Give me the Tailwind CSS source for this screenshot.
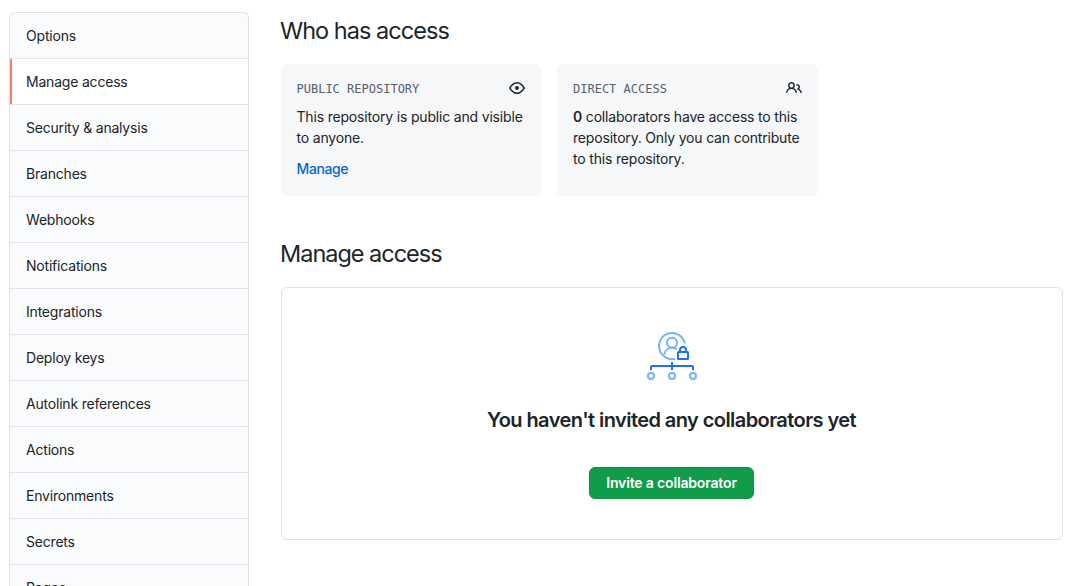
<!DOCTYPE html>
<html lang="en">
<head>
<meta charset="utf-8">
<title>Manage access</title>
<script src="https://cdn.jsdelivr.net/npm/@tailwindcss/browser@4"></script>
</head>
<body class="h-[586px] overflow-hidden bg-white font-['Inter',sans-serif] text-sm leading-[21px] text-[#202428] antialiased">
<div class="flex gap-8 pl-[9px] pt-3">
  <nav class="w-60 shrink-0 overflow-hidden rounded-md border border-[#dfe2e6] bg-[#fafbfc] tracking-[-0.2px] *:flex *:h-[46px] *:items-center *:border-b *:border-[#e3e5e9] *:pl-4">
    <a>Options</a>
    <a class="bg-white shadow-[inset_2px_0_0_#fb7a68]">Manage access</a>
    <a>Security &amp; analysis</a>
    <a>Branches</a>
    <a>Webhooks</a>
    <a>Notifications</a>
    <a>Integrations</a>
    <a>Deploy keys</a>
    <a>Autolink references</a>
    <a>Actions</a>
    <a>Environments</a>
    <a>Secrets</a>
    <a>Pages</a>
  </nav>
  <main class="w-[782px] shrink-0">
    <h2 class="-ml-px pt-px text-[23.5px] leading-9 tracking-[-0.97px]">Who has access</h2>
    <div class="mt-[15px] flex gap-4">
      <section class="h-[132px] w-[260px] rounded-md bg-[#f5f7f9] py-4 pl-[15.5px] pr-4">
        <div class="flex h-4 items-center justify-between">
          <span class="whitespace-nowrap pt-0.5 font-['DejaVu_Sans_Mono',monospace] text-xs text-[#586069]">PUBLIC REPOSITORY</span>
          <svg class="size-4" viewBox="0 0 16 16" fill="#24292e" fill-rule="evenodd"><path d="M1.679 7.932c.412-.621 1.242-1.75 2.366-2.717C5.175 4.242 6.527 3.5 8 3.5c1.473 0 2.824.742 3.955 1.715 1.124.967 1.954 2.096 2.366 2.717a.119.119 0 010 .136c-.412.621-1.242 1.75-2.366 2.717C10.825 11.758 9.473 12.5 8 12.5c-1.473 0-2.824-.742-3.955-1.715C2.92 9.818 2.09 8.69 1.679 8.068a.119.119 0 010-.136zM8 2c-1.981 0-3.67.992-4.933 2.078C1.797 5.169.88 6.423.43 7.1a1.619 1.619 0 000 1.798c.45.678 1.367 1.932 2.637 3.024C4.329 13.008 6.019 14 8 14c1.981 0 3.67-.992 4.933-2.078 1.27-1.091 2.187-2.345 2.637-3.023a1.619 1.619 0 000-1.798c-.45-.678-1.367-1.932-2.637-3.023C11.671 2.992 9.981 2 8 2zm0 8a2 2 0 100-4 2 2 0 000 4z"/></svg>
        </div>
        <p class="mt-2.5 whitespace-nowrap tracking-[-0.18px]">This repository is public and visible<br>to anyone.</p>
        <a class="mt-2.5 block font-medium tracking-[-0.4px] text-[#0366d6]">Manage</a>
      </section>
      <section class="h-[132px] w-[261px] rounded-md bg-[#f5f7f9] p-4">
        <div class="flex h-4 items-center justify-between">
          <span class="whitespace-nowrap pt-0.5 font-['DejaVu_Sans_Mono',monospace] text-xs text-[#586069]">DIRECT ACCESS</span>
          <svg class="size-4" viewBox="0 0 16 16" fill="#24292e" fill-rule="evenodd"><path d="M5.5 3.5a2 2 0 100 4 2 2 0 000-4zM2 5.5a3.5 3.5 0 115.898 2.549 5.507 5.507 0 013.034 4.084.75.75 0 11-1.482.235 4.001 4.001 0 00-7.9 0 .75.75 0 01-1.482-.236A5.507 5.507 0 013.102 8.05 3.49 3.49 0 012 5.5zM11 4a.75.75 0 100 1.5 1.5 1.5 0 01.666 2.844.75.75 0 00-.416.672v.352a.75.75 0 00.574.73c1.2.289 2.162 1.2 2.522 2.372a.75.75 0 101.434-.44 5.01 5.01 0 00-2.56-3.012A3 3 0 0011 4z"/></svg>
        </div>
        <p class="mt-2.5 whitespace-nowrap tracking-[-0.18px]"><strong class="font-semibold">0</strong> collaborators have access to this<br>repository. Only you can contribute<br>to this repository.</p>
      </section>
    </div>
    <h2 class="-ml-px mt-10 text-[23.5px] leading-9 tracking-[-1.02px]">Manage access</h2>
    <section class="mt-[15px] flex h-[253px] flex-col items-center rounded-md border border-[#dfe1e4] pt-[42px]">
      <svg class="size-[52px]" viewBox="14 10 52 52" fill="none" stroke-width="2">
        <g stroke="#75b2fb">
          <path d="M52.8 23.5A13 13 0 1 0 43 38.7"/>
          <circle cx="40" cy="22.8" r="5"/>
          <path d="M32.3 34.5c.6-4 3.7-6.7 7.7-6.7 2 0 3.5.5 4.8 1.5"/>
          <circle cx="19" cy="56" r="3.1"/><circle cx="40" cy="56" r="3.1"/><circle cx="61" cy="56" r="3.1"/>
        </g>
        <g stroke="#1b74f5">
          <rect x="46" y="32" width="10" height="7" rx=".5"/>
          <path d="M48 32v-2a3 3 0 0 1 6 0v2"/>
          <path d="M19 50v-3q0-1 1-1h40q1 0 1 1v3M40 42v8"/>
        </g>
      </svg>
      <h3 class="mr-px mt-[23px] text-xl leading-[30px] font-semibold tracking-[-0.57px]">You haven't invited any collaborators yet</h3>
      <button class="mr-px mt-8 h-8 w-[165px] rounded-md border border-[#138f43] bg-[#119c49] text-sm font-semibold whitespace-nowrap tracking-[-0.16px] text-white">Invite a collaborator</button>
    </section>
  </main>
</div>
</body>
</html>
